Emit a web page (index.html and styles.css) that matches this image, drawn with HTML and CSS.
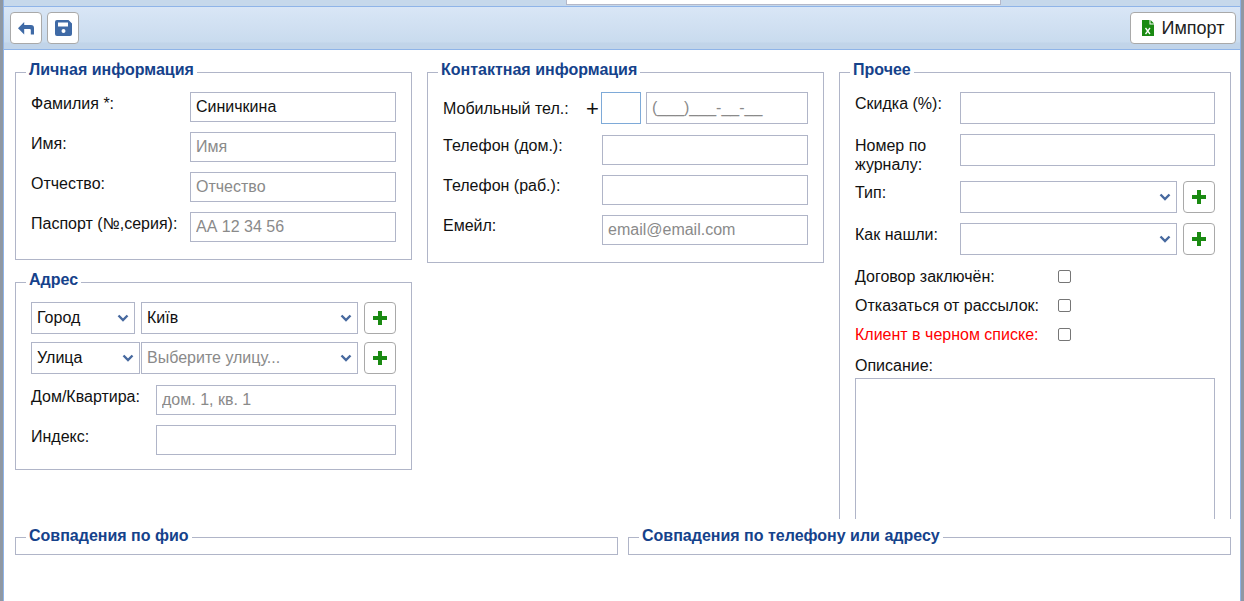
FILE: index.html
```html
<!DOCTYPE html>
<html lang="ru">
<head>
<meta charset="utf-8">
<title>Клиент</title>
<link rel="stylesheet" href="styles.css">
</head>
<body>
<div class="window">
  <div class="tabstrip"><div class="tab"></div></div>
  <div class="toolbar">
    <button class="btn icon-btn" type="button" aria-label="Назад">
      <svg width="16" height="13" viewBox="0 0 16 13"><path fill="#3f6aa6" d="M0 6.200 6.200 0v3H13q3 0 3 3v6.500h-3.200V8q0-1-1-1H6.200v5.500z"/></svg>
    </button>
    <button class="btn icon-btn" type="button" aria-label="Сохранить">
      <svg width="17" height="16" viewBox="0 0 17 16"><path fill="#3f6aa6" fill-rule="evenodd" d="M2 0h11.500L17 3.500V14a2 2 0 0 1-2 2H2a2 2 0 0 1-2-2V2a2 2 0 0 1 2-2zM3 2.500v4h10v-4zM8.500 9a2 2 0 1 0 0 4 2 2 0 0 0 0-4z"/></svg>
    </button>
    <button class="btn import-btn" type="button">
      <svg width="12" height="16" viewBox="0 0 12 16"><path fill="#1a8a12" d="M0 0h7.500v4.500H12V16H0z"/><path fill="#1a8a12" d="M8.500 0 12 3.500H8.500z"/><path stroke="#fff" stroke-width="1.300" fill="none" d="M3.500 8l4.500 6M8 8l-4.500 6"/></svg>
      <span>Импорт</span>
    </button>
  </div>

  <div class="scroll">
    <div class="columns">
      <div class="col col-left">
        <fieldset class="group group-personal">
          <legend>Личная информация</legend>
          <div class="row"><label>Фамилия *:</label><input class="field" value="Синичкина"></div>
          <div class="row"><label>Имя:</label><input class="field" placeholder="Имя"></div>
          <div class="row"><label>Отчество:</label><input class="field" placeholder="Отчество"></div>
          <div class="row"><label>Паспорт (№,серия):</label><input class="field" placeholder="АА 12 34 56"></div>
        </fieldset>
        <fieldset class="group group-address">
          <legend>Адрес</legend>
          <div class="select-row">
            <div class="select w-city"><span>Город</span><svg class="chev" viewBox="0 0 12 8"><path d="M1.500 1.500 6 6l4.500-4.500" fill="none" stroke="#47699f" stroke-width="2.400"/></svg></div>
            <div class="select grow"><span>Київ</span><svg class="chev" viewBox="0 0 12 8"><path d="M1.500 1.500 6 6l4.500-4.500" fill="none" stroke="#47699f" stroke-width="2.400"/></svg></div>
            <button class="btn add-btn" type="button" aria-label="Добавить"><svg width="16" height="16" viewBox="0 0 16 16"><path fill="#1a8a12" d="M6 1h4v5h5v4h-5v5H6v-5H1V6h5z"/></svg></button>
          </div>
          <div class="select-row row-street">
            <div class="select w-street"><span>Улица</span><svg class="chev" viewBox="0 0 12 8"><path d="M1.500 1.500 6 6l4.500-4.500" fill="none" stroke="#47699f" stroke-width="2.400"/></svg></div>
            <div class="select grow"><span class="muted">Выберите улицу...</span><svg class="chev" viewBox="0 0 12 8"><path d="M1.500 1.500 6 6l4.500-4.500" fill="none" stroke="#47699f" stroke-width="2.400"/></svg></div>
            <button class="btn add-btn" type="button" aria-label="Добавить"><svg width="16" height="16" viewBox="0 0 16 16"><path fill="#1a8a12" d="M6 1h4v5h5v4h-5v5H6v-5H1V6h5z"/></svg></button>
          </div>
          <div class="row addr-row first"><label>Дом/Квартира:</label><input class="field" placeholder="дом. 1, кв. 1"></div>
          <div class="row addr-row"><label>Индекс:</label><input class="field"></div>
        </fieldset>
      </div>

      <div class="col col-mid">
        <fieldset class="group group-contact">
          <legend>Контактная информация</legend>
          <div class="row mobile">
            <label>Мобильный тел.:</label>
            <span class="plus">+</span>
            <input class="field code">
            <input class="field phone" placeholder="(___)___-__-__">
          </div>
          <div class="row contact-row"><label>Телефон (дом.):</label><input class="field"></div>
          <div class="row contact-row"><label>Телефон (раб.):</label><input class="field"></div>
          <div class="row contact-row"><label>Емейл:</label><input class="field" placeholder="email@email.com"></div>
        </fieldset>
      </div>

      <div class="col col-right">
        <fieldset class="group group-other">
          <legend>Прочее</legend>
          <div class="row other-row r1"><label>Скидка (%):</label><input class="field"></div>
          <div class="row other-row r2"><label>Номер по журналу:</label><input class="field"></div>
          <div class="row other-row r3"><label>Тип:</label>
            <div class="select grow"><svg class="chev" viewBox="0 0 12 8"><path d="M1.500 1.500 6 6l4.500-4.500" fill="none" stroke="#47699f" stroke-width="2.400"/></svg></div>
            <button class="btn add-btn" type="button" aria-label="Добавить"><svg width="16" height="16" viewBox="0 0 16 16"><path fill="#1a8a12" d="M6 1h4v5h5v4h-5v5H6v-5H1V6h5z"/></svg></button>
          </div>
          <div class="row other-row r4"><label>Как нашли:</label>
            <div class="select grow"><svg class="chev" viewBox="0 0 12 8"><path d="M1.500 1.500 6 6l4.500-4.500" fill="none" stroke="#47699f" stroke-width="2.400"/></svg></div>
            <button class="btn add-btn" type="button" aria-label="Добавить"><svg width="16" height="16" viewBox="0 0 16 16"><path fill="#1a8a12" d="M6 1h4v5h5v4h-5v5H6v-5H1V6h5z"/></svg></button>
          </div>
          <div class="check-row first"><label>Договор заключён:</label><span class="check"></span></div>
          <div class="check-row"><label>Отказаться от рассылок:</label><span class="check"></span></div>
          <div class="check-row danger"><label>Клиент в черном списке:</label><span class="check"></span></div>
          <div class="desc-label">Описание:</div>
          <textarea class="desc"></textarea>
        </fieldset>
      </div>
    </div>
  </div>

  <div class="matches">
    <fieldset class="group match"><legend>Совпадения по фио</legend></fieldset>
    <fieldset class="group match"><legend>Совпадения по телефону или адресу</legend></fieldset>
  </div>
</div>
</body>
</html>
```
FILE: styles.css
```css
* { box-sizing: border-box; }
html, body { height: 100%; }
body {
  margin: 0;
  background: #8f98a3;
  font: 16px "Liberation Sans", Arial, sans-serif;
  color: #111;
  overflow: hidden;
}
.window {
  height: 601px;
  margin: 0 0 0 3px;
  width: 1238px;
  background: #fff;
  border-left: 1px solid #8fb4e8;
  border-right: 1px solid #8fb4e8;
  display: flex;
  flex-direction: column;
  overflow: hidden;
}
.tabstrip {
  height: 6px;
  background: #c6d8eb;
  flex: none;
  display: flex;
}
.tab {
  width: 435px;
  height: 5px;
  margin-left: 562px;
  background: #fff;
  border: 1px solid #b5b8c8;
  border-top: 0;
}
.toolbar {
  height: 44px;
  flex: none;
  border-top: 1px solid #8fb4e8;
  border-bottom: 1px solid #8fb4e8;
  background: linear-gradient(#d9e6f6 0, #c9dbee 84%, #c1d4e9 85%, #c1d4e9 100%);
  display: flex;
  align-items: center;
  padding: 0 4px 0 6px;
  gap: 5px;
}
.btn {
  border: 1px solid #a9a9a9;
  border-radius: 4px;
  background: #fff;
  display: flex;
  align-items: center;
  justify-content: center;
  padding: 0;
  font: inherit;
  cursor: pointer;
  flex: none;
}
.icon-btn { width: 32px; height: 32px; }
.import-btn {
  margin-left: auto;
  width: 106px;
  height: 32px;
  gap: 8px;
  font-size: 18px;
  color: #222;
}
.add-btn { width: 32px; height: 32px; }
.scroll {
  height: 469px;
  flex: none;
  overflow: hidden;
}
.columns {
  display: grid;
  grid-template-columns: 397px 397px 392px;
  column-gap: 15px;
  padding: 11px 0 0 11px;
}
.col { display: flex; flex-direction: column; min-width: 0; }
.group {
  margin: 0;
  padding: 0;
  border: 1px solid #b0b5c8;
  min-width: 0;
}
.group legend {
  margin-left: 10px;
  padding: 0 3px 6px;
  font-weight: bold;
  font-size: 16px;
  line-height: 17px;
  color: #15428b;
}
.group-personal legend,
.group-address legend,
.group-contact legend,
.group-other legend { margin-left: -5px; }
.row { display: flex; align-items: flex-start; }
.row label { flex: none; }
.field {
  height: 30px;
  border: 1px solid #b0b5c8;
  padding: 0 5px 1px;
  font: inherit;
  color: #111;
  background: #fff;
  outline: 0;
  min-width: 0;
}
.field::placeholder { color: #8a8a8a; opacity: 1; }

.group-personal { height: 199px; padding: 8px 15px 0; }
.group-personal .row { height: 40px; }
.group-personal label { width: 159px; line-height: 20px; padding-top: 2px; }
.group-personal .field { width: 206px; }

.group-address { margin-top: 11px; height: 199px; padding: 8px 15px 0; }
.select-row { display: flex; gap: 6px; height: 32px; }
.row-street { gap: 0; margin-top: 8px; }
.row-street .w-street { margin-right: 1px; }
.row-street .add-btn { margin-left: 6px; }
.select {
  height: 32px;
  border: 1px solid #b0b5c8;
  background: #fff;
  display: flex;
  align-items: center;
  justify-content: space-between;
  padding: 0 5px;
  min-width: 0;
}
.grow { flex: 1; }
.w-city { width: 104px; flex: none; }
.w-street { width: 109px; flex: none; }
.muted { color: #8a8a8a; }
.chev { width: 12px; height: 8px; flex: none; margin-left: auto; }
.addr-row { height: 40px; }
.addr-row.first { margin-top: 11px; }
.addr-row label { width: 125px; line-height: 20px; padding-top: 2px; }
.addr-row .field { width: 240px; }

.group-contact { height: 202px; padding: 8px 15px 0; }
.mobile { height: 32px; }
.mobile label { width: 143px; padding-top: 8px; line-height: 18px; }
.plus { width: 15px; padding-top: 8px; line-height: 18px; font-size: 22px; }
.code { width: 40px; height: 32px; border-color: #7eaad8; }
.phone { width: 162px; height: 32px; margin-left: 5px; }
.contact-row { height: 40px; }
.mobile + .contact-row { margin-top: 11px; }
.contact-row label { width: 159px; line-height: 20px; padding-top: 1px; }
.contact-row .field { width: 206px; }

.group-other { height: 500px; padding: 8px 15px 0; }
.other-row label { width: 105px; line-height: 20px; flex: none; }
.other-row .field { width: 255px; }
.r1 { height: 42px; }
.r1 label { padding-top: 2px; }
.r1 .field { height: 32px; }
.r2 { height: 47px; }
.r2 label { line-height: 19px; padding-top: 2px; }
.r2 .field { height: 32px; }
.r3, .r4 { height: 42px; gap: 0; }
.r3 label, .r4 label { padding-top: 2px; }
.r3 .add-btn, .r4 .add-btn { margin-left: 6px; }
.check-row {
  display: flex;
  align-items: center;
  height: 29px;
}
.check-row.first { margin-top: -3px; }
.check-row label { width: 203px; flex: none; }
.danger { color: #f00; }
.check {
  width: 13px;
  height: 13px;
  border: 1px solid #767676;
  border-radius: 2px;
  background: #fff;
}
.desc-label { margin-top: 7px; line-height: 20px; height: 22px; }
.desc {
  display: block;
  width: 360px;
  height: 200px;
  border: 1px solid #b0b5c8;
  resize: none;
  outline: 0;
}

.matches {
  display: grid;
  grid-template-columns: 603px 603px;
  column-gap: 10px;
  padding: 8px 0 0 11px;
}
.match { height: 28px; }
.match legend { padding-bottom: 4px; }
```
